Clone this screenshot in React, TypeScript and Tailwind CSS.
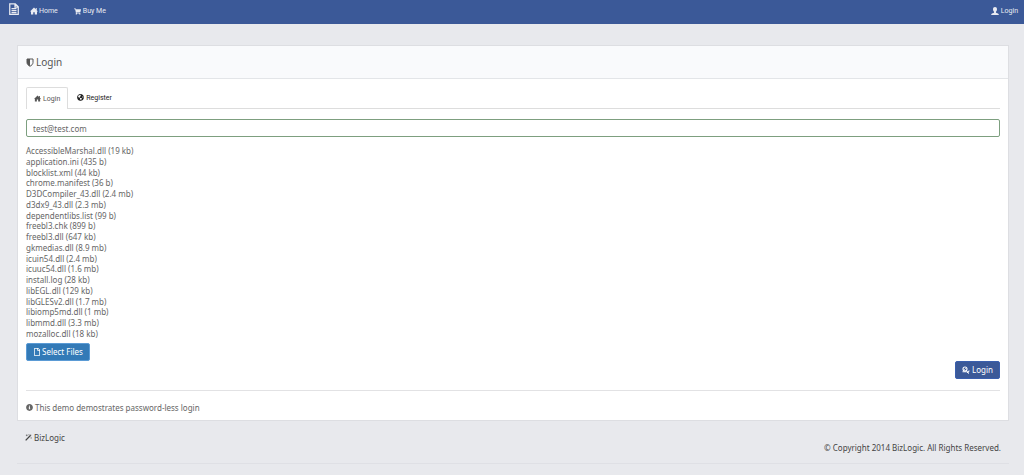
import React, { useState } from "react";
import { FaRegFile, FaShoppingCart, FaGlobeAmericas, FaInfoCircle } from "react-icons/fa";

const files = [
  "AccessibleMarshal.dll (19 kb)",
  "application.ini (435 b)",
  "blocklist.xml (44 kb)",
  "chrome.manifest (36 b)",
  "D3DCompiler_43.dll (2.4 mb)",
  "d3dx9_43.dll (2.3 mb)",
  "dependentlibs.list (99 b)",
  "freebl3.chk (899 b)",
  "freebl3.dll (647 kb)",
  "gkmedias.dll (8.9 mb)",
  "icuin54.dll (2.4 mb)",
  "icuuc54.dll (1.6 mb)",
  "install.log (28 kb)",
  "libEGL.dll (129 kb)",
  "libGLESv2.dll (1.7 mb)",
  "libiomp5md.dll (1 mb)",
  "libmmd.dll (3.3 mb)",
  "mozalloc.dll (18 kb)",
];

const DocumentIcon = () => (
  <svg viewBox="0 0 20 24" className="h-3 w-2.5" fill="none" stroke="currentColor" strokeWidth="2.500" aria-hidden="true">
    <path d="M1.500 1.500h11l6 6v15h-17zM12 1v7h7M5 11h10M5 15h10M5 19h10" />
  </svg>
);

const HomeIcon = ({ className = "size-2" }: { className?: string }) => (
  <svg viewBox="0 0 16 16" className={className} fill="currentColor" aria-hidden="true">
    <path d="M8 1 0 9h2v6h4.500v-4.500h3V15H14V9h2l-2.500-2.500V2h-2v2.500z" />
  </svg>
);

const UserIcon = () => (
  <svg viewBox="0 0 16 16" className="size-2 shrink-0" fill="currentColor" aria-hidden="true">
    <path d="M8 0C5.600 0 4 1.800 4 4.500c0 2.200.9 4 2.100 5v1.300C5.800 12 .6 12.500.4 15.200V16h15.200v-.8C15.400 12.500 10.200 12 9.900 10.800V9.500c1.200-1 2.100-2.800 2.100-5C12 1.800 10.400 0 8 0z" />
  </svg>
);

const ShieldIcon = () => (
  <svg viewBox="0 0 16 18" className="h-[9px] w-2 shrink-0" aria-hidden="true">
    <path d="M2 2h12v7c0 3.500-3 6-6 7.500C5 15 2 12.500 2 9z" fill="none" stroke="currentColor" strokeWidth="2" />
    <path d="M2 2h6v14.500C5 15 2 12.500 2 9z" fill="currentColor" />
  </svg>
);

const KeyIcon = () => (
  <svg viewBox="0 0 16 16" className="size-2 shrink-0" fill="none" stroke="currentColor" aria-hidden="true">
    <circle cx="6" cy="6" r="4" strokeWidth="2.200" />
    <path d="M4 8l4-4" strokeWidth="1.300" />
    <path d="M1 11.500h8l5 3.500M11 11l4-1M12 14v-4" strokeWidth="2" />
  </svg>
);

const WandIcon = () => (
  <svg viewBox="0 0 16 16" className="size-[7px] shrink-0" fill="none" stroke="currentColor" aria-hidden="true">
    <path d="M1.500 14.500 13 3" strokeWidth="3" />
    <path d="M4 1v4M2 3h4M9 0v3M14 7v4M13 1l2 2" strokeWidth="1.200" />
  </svg>
);

const App: React.FC = () => {
  const [email, setEmail] = useState("test@test.com");

  return (
    <div className="min-h-screen bg-[#e8e9ed] font-['Noto_Sans',sans-serif] text-[8px] text-[#666]">
      {/* Top bar */}
      <nav className="flex h-6 items-center bg-[#3b5998] pr-1.5 pl-[9px] font-['Roboto',sans-serif] text-[7px] leading-[10px] text-[#e9ebf2]">
        <a href="#" aria-label="Start" className="mr-[11px] pb-1.5"><DocumentIcon /></a>
        <a href="#" className="mr-4 flex items-center gap-px pb-0.5"><HomeIcon />Home</a>
        <a href="#" className="flex items-center gap-0.5 pb-0.5"><FaShoppingCart className="size-[7px]" />Buy Me</a>
        <a href="#" className="ml-auto flex items-center gap-0.5 pb-0.5"><UserIcon />Login</a>
      </nav>

      <div className="mr-[15px] ml-[17px] pt-[21px]">
        <main className="border border-[#dddee2] bg-white">
          <h1 className="flex h-[33px] items-center gap-0.5 border-b border-[#e3e5e8] bg-[#f9fafc] px-2 text-[10px] text-[#555]">
            <ShieldIcon />Login
          </h1>

          <div className="px-2 pt-2">
            <div className="flex items-end border-b border-[#ddd] font-['Roboto',sans-serif] text-[7px] leading-[10px]">
              <a href="#login" className="-mb-px flex h-[22px] items-center gap-0.5 rounded-t-xs border border-b-0 border-[#ddd] bg-white px-[7px] text-[#555]">
                <HomeIcon className="size-[7px]" />Login
              </a>
              <a href="#register" className="flex h-[21px] items-center gap-0.5 px-[9px] text-[#222]">
                <FaGlobeAmericas className="size-[7px]" />Register
              </a>
            </div>

            <form onSubmit={(e) => e.preventDefault()}>
              <input
                type="email"
                aria-label="Email"
                value={email}
                onChange={(e) => setEmail(e.target.value)}
                className="mt-2.5 block h-[18px] w-full rounded-xs border border-[#7d9f7f] bg-white px-1.5 text-[8px] text-[#666] outline-none"
              />

              {/* Chosen files */}
              <ul className="mt-[9px] flex h-[193px] flex-col justify-between leading-[10px]">
                {files.map((file) => <li key={file}>{file}</li>)}
              </ul>

              <button type="button" className="mt-1 flex h-[18px] items-center gap-px rounded-xs border border-[#5b9bd5] bg-[#337ab7] px-1.5 text-white">
                <FaRegFile className="size-2" />Select Files
              </button>
              <div className="flex justify-end">
                <button type="submit" className="flex h-[18px] items-center gap-0.5 rounded-xs border border-[#3a5fae] bg-[#3b5998] px-1.5 text-white">
                  <KeyIcon />Login
                </button>
              </div>
            </form>

            <p className="mt-[11px] flex h-[30px] items-center gap-0.5 border-t border-[#e2e2e4] pt-1">
              <FaInfoCircle className="size-[7px]" />This demo demostrates password-less login
            </p>
          </div>
        </main>

        <footer className="border-b border-[#dfe0e5] px-2 pt-[11px] pb-2.5 text-[#444]">
          <a href="#" className="flex items-center gap-0.5 leading-[11px]"><WandIcon />BizLogic</a>
          <p className="text-right leading-[10px]">© Copyright 2014 BizLogic. All Rights Reserved.</p>
        </footer>
      </div>
    </div>
  );
};

export default App;
